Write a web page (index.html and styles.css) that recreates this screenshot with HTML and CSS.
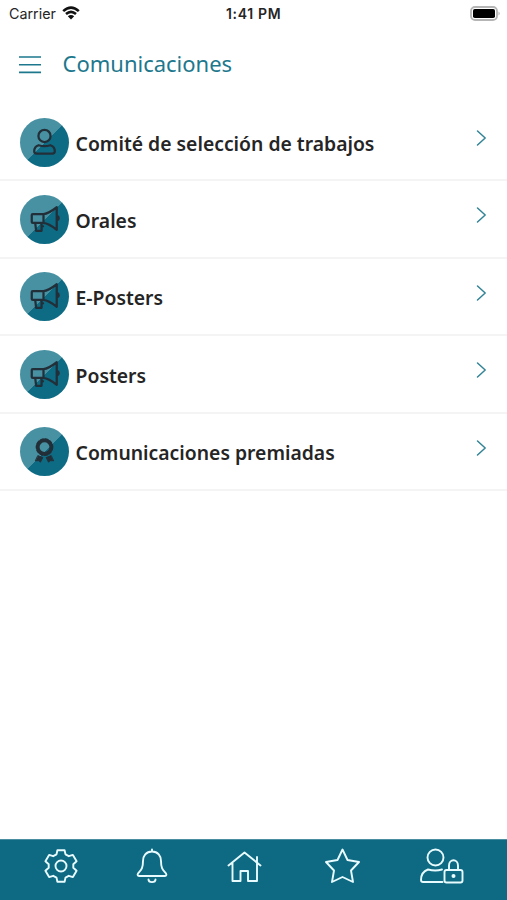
FILE: index.html
```html
<!DOCTYPE html>
<html lang="es">
<head>
<meta charset="utf-8">
<title>Comunicaciones</title>
<link rel="stylesheet" href="styles.css">
</head>
<body>
<svg class="defs" width="0" height="0">
  <defs>
    <symbol id="horn" viewBox="0 0 50 50"><path d="M13 19.500H24V28.500H13Q12 28.500 12 27.500V20.500Q12 19.500 13 19.500ZM24 19.500C29 19 33 16 37.500 12.500V35.500C33 32 29 29 24 28.500M38 21.500C40 22 40 25.500 38 26M15.500 28.500L16.500 36.500H22V28.500M22 32H23.500"/></symbol>
    <symbol id="next" viewBox="0 0 12 18"><path d="M2.500 2L10.200 9L2.500 16"/></symbol>
  </defs>
</svg>
<div class="app">
  <div class="status">
    <span class="carrier">Carrier</span>
    <svg class="wifi" viewBox="0 0 18 14"><path d="M1.200 5.100Q9-2 16.800 5.100M4 8.100Q9 3.800 14 8.100" /><path class="dot" d="M9 13.500L5.800 10.300Q9 7.800 12.200 10.300Z"/></svg>
    <span class="time">1:41 PM</span>
    <svg class="battery" viewBox="0 0 32 16"><rect class="shell" x="1" y="1" width="26" height="13" rx="4"/><rect x="3" y="3" width="22" height="9" rx="1.800"/><path class="tip" d="M28.500 5.500Q31 7.500 28.500 9.500Z"/></svg>
  </div>
  <header class="header">
    <svg class="menu" viewBox="0 0 22 18"><path d="M0 1H22M0 8.700H22M0 16.400H22"/></svg>
    <h1>Comunicaciones</h1>
  </header>
  <main class="list">
    <div class="row"><span class="badge"><svg viewBox="0 0 50 50"><circle cx="25" cy="18.300" r="6.200"/><path d="M19 27.800Q25 29.800 31 27.800Q35.500 29 35.500 34Q35.500 36.300 33 36.300H17Q14.500 36.300 14.500 34Q14.500 29 19 27.800Z"/></svg></span><span class="label">Comité de selección de trabajos</span><svg class="next"><use href="#next"/></svg></div>
    <div class="row"><span class="badge"><svg><use href="#horn"/></svg></span><span class="label">Orales</span><svg class="next"><use href="#next"/></svg></div>
    <div class="row"><span class="badge"><svg><use href="#horn"/></svg></span><span class="label">E-Posters</span><svg class="next"><use href="#next"/></svg></div>
    <div class="row"><span class="badge"><svg><use href="#horn"/></svg></span><span class="label">Posters</span><svg class="next"><use href="#next"/></svg></div>
    <div class="row"><span class="badge"><svg viewBox="0 0 50 50"><circle class="medal" cx="25" cy="20.500" r="6.900"/><circle class="scallop" cx="25" cy="20.500" r="8.400"/><path class="ribbon" d="M18.500 29.300L23.300 31.200L20.800 36L19.300 34.300L16 34.500ZM31.500 29.300L26.700 31.200L29.200 36L30.700 34.300L34 34.500Z"/></svg></span><span class="label">Comunicaciones premiadas</span><svg class="next"><use href="#next"/></svg></div>
  </main>
  <nav class="tabs">
    <svg class="gear" viewBox="0 0 34 34"><circle cx="17" cy="17" r="5.500"/><path d="M13.400 1.200L20.600 1.200L21.500 5.400L24.800 7.200L28.900 5.900L32.600 12.300L29.300 15.300V18.700L32.600 21.700L28.900 28.100L24.800 26.800L21.500 28.600L20.600 32.800H13.400L12.500 28.600L9.200 26.800L5.100 28.100L1.400 21.700L4.700 18.700V15.300L1.400 12.300L5.100 5.900L9.200 7.200L12.500 5.400Z"/></svg>
    <svg class="bell" viewBox="0 0 32 36"><path d="M16 1.500V3.500M16 3.500C10 3.500 7 8 7 13C7 21 5 22 2 25.500C1 27.500 2 28 3.500 28H28.500C30 28 31 27.500 30 25.500C27 22 25 21 25 13C25 8 22 3.500 16 3.500ZM12.500 31.500C12.500 35 19.500 35 19.500 31.500"/></svg>
    <svg class="home" viewBox="0 0 34 32"><path d="M1 14.500L17 1.500L33 14.500M5 12V30H13V20H20.500V30H29.500V12M29.500 6V12"/></svg>
    <svg class="star" viewBox="0 0 36 36"><path d="M18 1.500L23 12L34.500 14L26.500 22.500L28.500 34L18 29L7.500 34L9.500 22.500L1.500 14L13 12Z"/></svg>
    <svg class="user" viewBox="0 0 44 36"><circle cx="15.500" cy="9.500" r="8"/><path d="M22.500 34H3Q1 34 1 32Q1 24 8 21.500Q15.500 23.500 22 21.500M29 22V17.500C29 10.500 38 10.500 38 17.500V22"/><rect x="24.500" y="22" width="18" height="12.500" rx="2"/><circle class="dot" cx="33.500" cy="28" r="2"/></svg>
  </nav>
</div>
</body>
</html>
```
FILE: styles.css
```css
* { box-sizing: border-box; }
body { margin: 0; background: #fff; font-family: "Noto Sans", sans-serif; }
svg { display: block; fill: none; stroke-linecap: round; stroke-linejoin: round; }
.defs { height: 0; }
.app { height: 900px; display: flex; flex-direction: column; }
.status { height: 28px; display: grid; grid-template-columns: 53px 164px 1fr 37px; align-items: center; padding: 0 0 1px 9px; font-family: Inter, sans-serif; color: #252525; }
.carrier { font-size: 14.3px; }
.wifi { width: 18px; height: 14px; margin-top: -2px; stroke: #111; stroke-width: 2.6; stroke-linecap: butt; }
.wifi .dot { fill: #111; stroke: none; }
.time { font-size: 14px; font-weight: 600; letter-spacing: .65px; white-space: nowrap; }
.battery { width: 32px; height: 16px; margin-top: 0; }
.battery rect { fill: #000; }
.battery .shell { fill: #fff; stroke: #b5b5b5; stroke-width: 1.8; }
.battery .tip { fill: #b5b5b5; }
.header { height: 76px; display: flex; align-items: flex-start; padding: 28px 0 0 19px; }
.menu { width: 22px; height: 18px; stroke: #1d788d; stroke-width: 1.6; }
h1 { margin: -8px 0 0 21.500px; font-size: 22px; line-height: 30px; font-weight: 400; color: #1d788d; }
.list { flex: 1; }
.row { height: 77.400px; display: flex; align-items: flex-start; padding: 13.500px 20px 0; border-bottom: 2px solid #f4f4f4; }
.badge { width: 49px; height: 49px; margin-left: .4px; flex: none; border-radius: 50%; background: linear-gradient(135deg, #4791a2 50%, #0e6b84 50.500%); }
.badge svg { width: 49px; height: 49px; stroke: #222f38; stroke-width: 2.3; }
.badge .medal { stroke-width: 3.800; }
.badge .scallop { stroke-width: 1.2; stroke-dasharray: 3 2; }
.badge .ribbon { fill: #222f38; stroke-width: 1; }
.label { margin: 12px 0 0 6.200px; font-size: 19.350px; line-height: 28px; font-weight: 600; color: #252525; }
.next { width: 12px; height: 18px; margin: 11.500px 0 0 auto; stroke: #318395; stroke-width: 1.5; }
.tabs { height: 61px; display: flex; align-items: flex-start; background: #0e6a83; border-top: 1px solid #4a8fa1; }
.tabs svg { stroke: #e8fbff; stroke-width: 1.9; }
.gear { width: 34px; height: 34px; margin: 9px 0 0 44px; }
.bell { width: 32px; height: 36px; margin: 8px 0 0 58px; }
.home { width: 35px; height: 32px; margin: 11px 0 0 59px; }
.star { width: 37px; height: 36px; margin: 8px 0 0 61.500px; }
.user { width: 44px; height: 36px; margin: 8px 0 0 59px; }
.user .dot { fill: #e8fbff; stroke: none; }
```
